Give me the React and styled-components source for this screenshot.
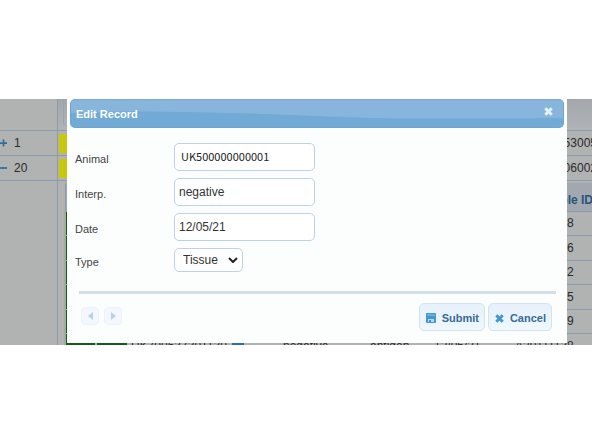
import React, { useState } from "react";
import styled, { createGlobalStyle } from "styled-components";

const GlobalStyle = createGlobalStyle`
  * {
    box-sizing: border-box;
  }
  body {
    margin: 0;
    background: #fff;
    font-family: "Liberation Sans", Arial, sans-serif;
    font-size: 12px;
    color: #333;
  }
`;

const samples = [
  { animal: "UK700637301125", date: "12/05/21", id: "A20111128" },
  { animal: "UK700637301126", date: "12/05/21", id: "A20111126" },
  { animal: "UK700637301127", date: "12/05/21", id: "A20111132" },
  { animal: "UK700637301128", date: "12/05/21", id: "A20111135" },
  { animal: "UK700637301129", date: "12/05/21", id: "A20111139" },
  { animal: "UK700637301130", date: "12/05/21", id: "A20111138" },
];

export default function App() {
  const [record, setRecord] = useState({
    animal: "UK500000000001",
    interp: "negative",
    date: "12/05/21",
    type: "Tissue",
  });
  const change = (e) =>
    setRecord({ ...record, [e.target.name]: e.target.value });

  return (
    <Page>
      <GlobalStyle />
      <Stage>
        <Backdrop aria-hidden="true">
          <GridHead>
            <Gutter />
            <HeadCell />
          </GridHead>
          <GridRow>
            <Gutter>
              <Toggle>
                <path d="M4 0v8M0 4h8" />
              </Toggle>
              1
            </Gutter>
            <Flag />
            <Number>A20153005</Number>
          </GridRow>
          <GridRow>
            <Gutter>
              <Toggle>
                <path d="M0 4h8" />
              </Toggle>
              20
            </Gutter>
            <Flag />
            <Number>A20106002</Number>
          </GridRow>
          <Detail>
            <Gutter />
            <SubTable>
              <thead>
                <tr>
                  <th />
                  <th />
                  <th>Animal</th>
                  <th>Interp.</th>
                  <th>Type</th>
                  <th>Date</th>
                  <SampleHead>Sample ID</SampleHead>
                </tr>
              </thead>
              <tbody>
                {samples.map((s) => (
                  <tr key={s.animal}>
                    <Status />
                    <Status />
                    <td>
                      {s.animal} <Mark />
                    </td>
                    <td>negative</td>
                    <td>antigen</td>
                    <td>{s.date}</td>
                    <td>{s.id}</td>
                  </tr>
                ))}
              </tbody>
            </SubTable>
          </Detail>
        </Backdrop>

        <Dialog role="dialog" aria-labelledby="title">
          <TitleBar>
            <Wave viewBox="0 0 494 29" preserveAspectRatio="none">
              <path d="M0 14C50 11 130 13 190 15S290 20 370 20 460 20 494 19V29H0Z" />
            </Wave>
            <Title id="title">Edit Record</Title>
            <Close type="button" aria-label="Close">
              <Cross />
            </Close>
          </TitleBar>
          <form onSubmit={(e) => e.preventDefault()}>
            <Fields>
              <Label htmlFor="animal">Animal</Label>
              <AnimalInput
                id="animal"
                name="animal"
                value={record.animal}
                onChange={change}
              />
              <Label htmlFor="interp">Interp.</Label>
              <Input
                id="interp"
                name="interp"
                value={record.interp}
                onChange={change}
              />
              <Label htmlFor="date">Date</Label>
              <Input
                id="date"
                name="date"
                value={record.date}
                onChange={change}
              />
              <Label htmlFor="type">Type</Label>
              <SelectWrap>
                <Select
                  id="type"
                  name="type"
                  value={record.type}
                  onChange={change}
                >
                  <option>Tissue</option>
                </Select>
                <Chevron viewBox="0 0 10 6">
                  <path d="M1 1l4 4 4-4" />
                </Chevron>
              </SelectWrap>
            </Fields>
            <Rule />
            <Footer>
              <Group $gap={5}>
                <Pager type="button" aria-label="Previous" disabled>
                  <svg width="5" height="8" viewBox="0 0 5 8">
                    <path d="M5 0v8L0 4z" fill="currentColor" />
                  </svg>
                </Pager>
                <Pager type="button" aria-label="Next" disabled>
                  <svg width="5" height="8" viewBox="0 0 5 8">
                    <path d="M0 0v8l5-4z" fill="currentColor" />
                  </svg>
                </Pager>
              </Group>
              <Group $gap={3}>
                <Button type="submit">
                  <svg width="10" height="10" viewBox="0 0 10 10">
                    <rect width="10" height="10" rx="1" fill="#4196d3" />
                    <path d="M1 2h8" stroke="#8fc4ec" />
                    <path d="M2 6h6v3H2z" fill="#b9daf3" />
                    <path d="M3 7h2v2H3z" fill="#4196d3" />
                  </svg>
                  Submit
                </Button>
                <Button type="button">
                  <Cross />
                  Cancel
                </Button>
              </Group>
            </Footer>
          </form>
        </Dialog>
      </Stage>
    </Page>
  );
}

const Cross = () => (
  <svg width="9" height="9" viewBox="0 0 9 9">
    <path
      d="M1.300 1.300l6.400 6.400M7.700 1.300L1.300 7.700"
      stroke="currentColor"
      strokeWidth="3"
    />
  </svg>
);

const Page = styled.main`
  padding-top: 99px;
`;

const Stage = styled.section`
  position: relative;
  overflow: hidden;
  padding: 0 25px 2px 67px;
`;

/* the grid that stays dimmed under the dialog */
const Backdrop = styled.div`
  position: absolute;
  inset: 0;
  overflow: hidden;
  background: #b1b2b2;
  color: #2b2b2b;
`;

const GridHead = styled.div`
  display: flex;
  height: 32px;
  background: linear-gradient(#a3a7ac, #b0b3b7);
  border-bottom: 1px solid #8b9bab;
`;

const GridRow = styled.div`
  display: flex;
  align-items: center;
  height: 25px;
  border-bottom: 1px solid #8b9bab;
`;

const Gutter = styled.div`
  display: flex;
  align-items: center;
  align-self: stretch;
  flex: none;
  gap: 7px;
  width: 58px;
  background: #b1b2b2;
  border-right: 1px solid #8b9bab;
`;

const HeadCell = styled.div`
  flex: 1;
  margin: 0 0 4px 5px;
  border-left: 1px solid #98a4b2;
  border-radius: 0 0 0 4px;
`;

const Toggle = styled.svg.attrs({ viewBox: "0 0 8 8" })`
  width: 7px;
  height: 8px;
  fill: none;
  stroke: #2d6f9f;
  stroke-width: 2;
`;

const Flag = styled.span`
  width: 40px;
  height: 19px;
  margin-left: 1px;
  background: #c8c80a;
`;

const Number = styled.span`
  flex: 1;
  margin-right: -5px;
  text-align: right;
`;

const Detail = styled.div`
  display: flex;
`;

const SubTable = styled.table`
  flex: 1;
  table-layout: fixed;
  width: 500px;
  margin: 2px 0 0 6px;
  border-left: 1px solid #8b9bab;
  border-collapse: collapse;
  th {
    height: 28px;
    padding: 7px 0 0 2px;
    background: #a2a8af;
    color: #28557c;
    border-bottom: 1px solid #8b9bab;
    white-space: nowrap;
  }
  th:nth-child(-n + 2) {
    width: 31px;
  }
  th:nth-child(3) {
    width: 152px;
  }
  th:nth-child(4) {
    width: 87px;
  }
  th:nth-child(5) {
    width: 64px;
  }
  th:nth-child(6) {
    width: 81px;
  }
  td {
    height: 24px;
    padding: 0 0 0 4px;
    border-bottom: 1px solid #8b9bab;
    white-space: nowrap;
  }
  tr:nth-child(even) td {
    height: 25px;
  }
`;

const SampleHead = styled.th`
  text-align: left;
  text-indent: 22px;
`;

const Status = styled.td`
  background: #115c18;
  background-clip: padding-box;
  border-left: 2px solid #9fae9f;
`;

const Mark = styled.span`
  display: inline-block;
  width: 12px;
  height: 8px;
  margin-left: 2px;
  background: #2d6f9f;
`;

const Dialog = styled.div`
  position: relative;
  padding: 0 3px 12px;
  background: #fcfefe;
`;

const TitleBar = styled.header`
  position: relative;
  display: flex;
  align-items: center;
  justify-content: space-between;
  height: 29px;
  padding: 0 10px 0 5px;
  overflow: hidden;
  border: 1px solid #6ea5cf;
  border-top-color: #82a9c6;
  border-radius: 5px;
  background: #88b5db;
  color: #fff;
`;

const Wave = styled.svg`
  position: absolute;
  inset: 0;
  width: 100%;
  height: 100%;
  fill: #70aad5;
`;

const Title = styled.h1`
  position: relative;
  margin: 0;
  font-size: 11px;
  line-height: 14px;
`;

const Close = styled.button`
  position: relative;
  display: flex;
  padding: 0 0 4px;
  border: 0;
  background: none;
  color: #e4f2fc;
`;

const Fields = styled.div`
  display: grid;
  grid-template-columns: 99px 141px;
  row-gap: 7px;
  align-items: center;
  padding: 15px 5px 19px;
`;

const Label = styled.label`
  padding-top: 3px;
  font-size: 11px;
  color: #444;
`;

const Input = styled.input`
  width: 100%;
  height: 28px;
  padding: 0 4px 1px;
  border: 1px solid #bed3e2;
  border-radius: 5px;
  background: #fff;
  color: #333;
  font: 12px "Liberation Sans", Arial, sans-serif;
`;

const AnimalInput = styled(Input)`
  padding: 0 6px 3px;
  color: #222;
  font: 11px "Noto Sans CJK SC", sans-serif;
`;

const SelectWrap = styled.div`
  position: relative;
  justify-self: start;
`;

const Select = styled.select`
  display: block;
  appearance: none;
  width: 69px;
  height: 24px;
  padding: 0 20px 1px 8px;
  border: 1px solid #bed3e2;
  border-radius: 5px;
  background: #fff;
  color: #333;
  font: 12px "Liberation Sans", Arial, sans-serif;
`;

const Chevron = styled.svg`
  position: absolute;
  top: 9px;
  right: 5px;
  width: 10px;
  height: 6px;
  fill: none;
  stroke: #222;
  stroke-width: 2;
  pointer-events: none;
`;

const Rule = styled.hr`
  height: 3px;
  margin: 0 8px 0 9px;
  border: 0;
  background: #d3dfe6;
`;

const Footer = styled.footer`
  display: flex;
  align-items: center;
  justify-content: space-between;
  padding: 9px 12px 0 11px;
`;

const Group = styled.div`
  display: flex;
  align-items: center;
  gap: ${(props) => props.$gap}px;
`;

const Pager = styled.button`
  display: flex;
  align-items: center;
  justify-content: center;
  width: 18px;
  height: 18px;
  margin-bottom: 3px;
  padding: 0;
  border: 1px solid #edf3fb;
  border-radius: 4px;
  background: #f3f8fe;
  color: #b0d3ee;
`;

const Button = styled.button`
  display: flex;
  align-items: center;
  gap: 6px;
  height: 28px;
  padding: 2px 5px 0 6px;
  border: 1px solid #d3e3f0;
  border-radius: 5px;
  background: linear-gradient(#e6f1fb, #f0f7fe);
  color: #376a97;
  font: bold 11px "Liberation Sans", Arial, sans-serif;
  svg {
    color: #3e97d6;
  }
`;
